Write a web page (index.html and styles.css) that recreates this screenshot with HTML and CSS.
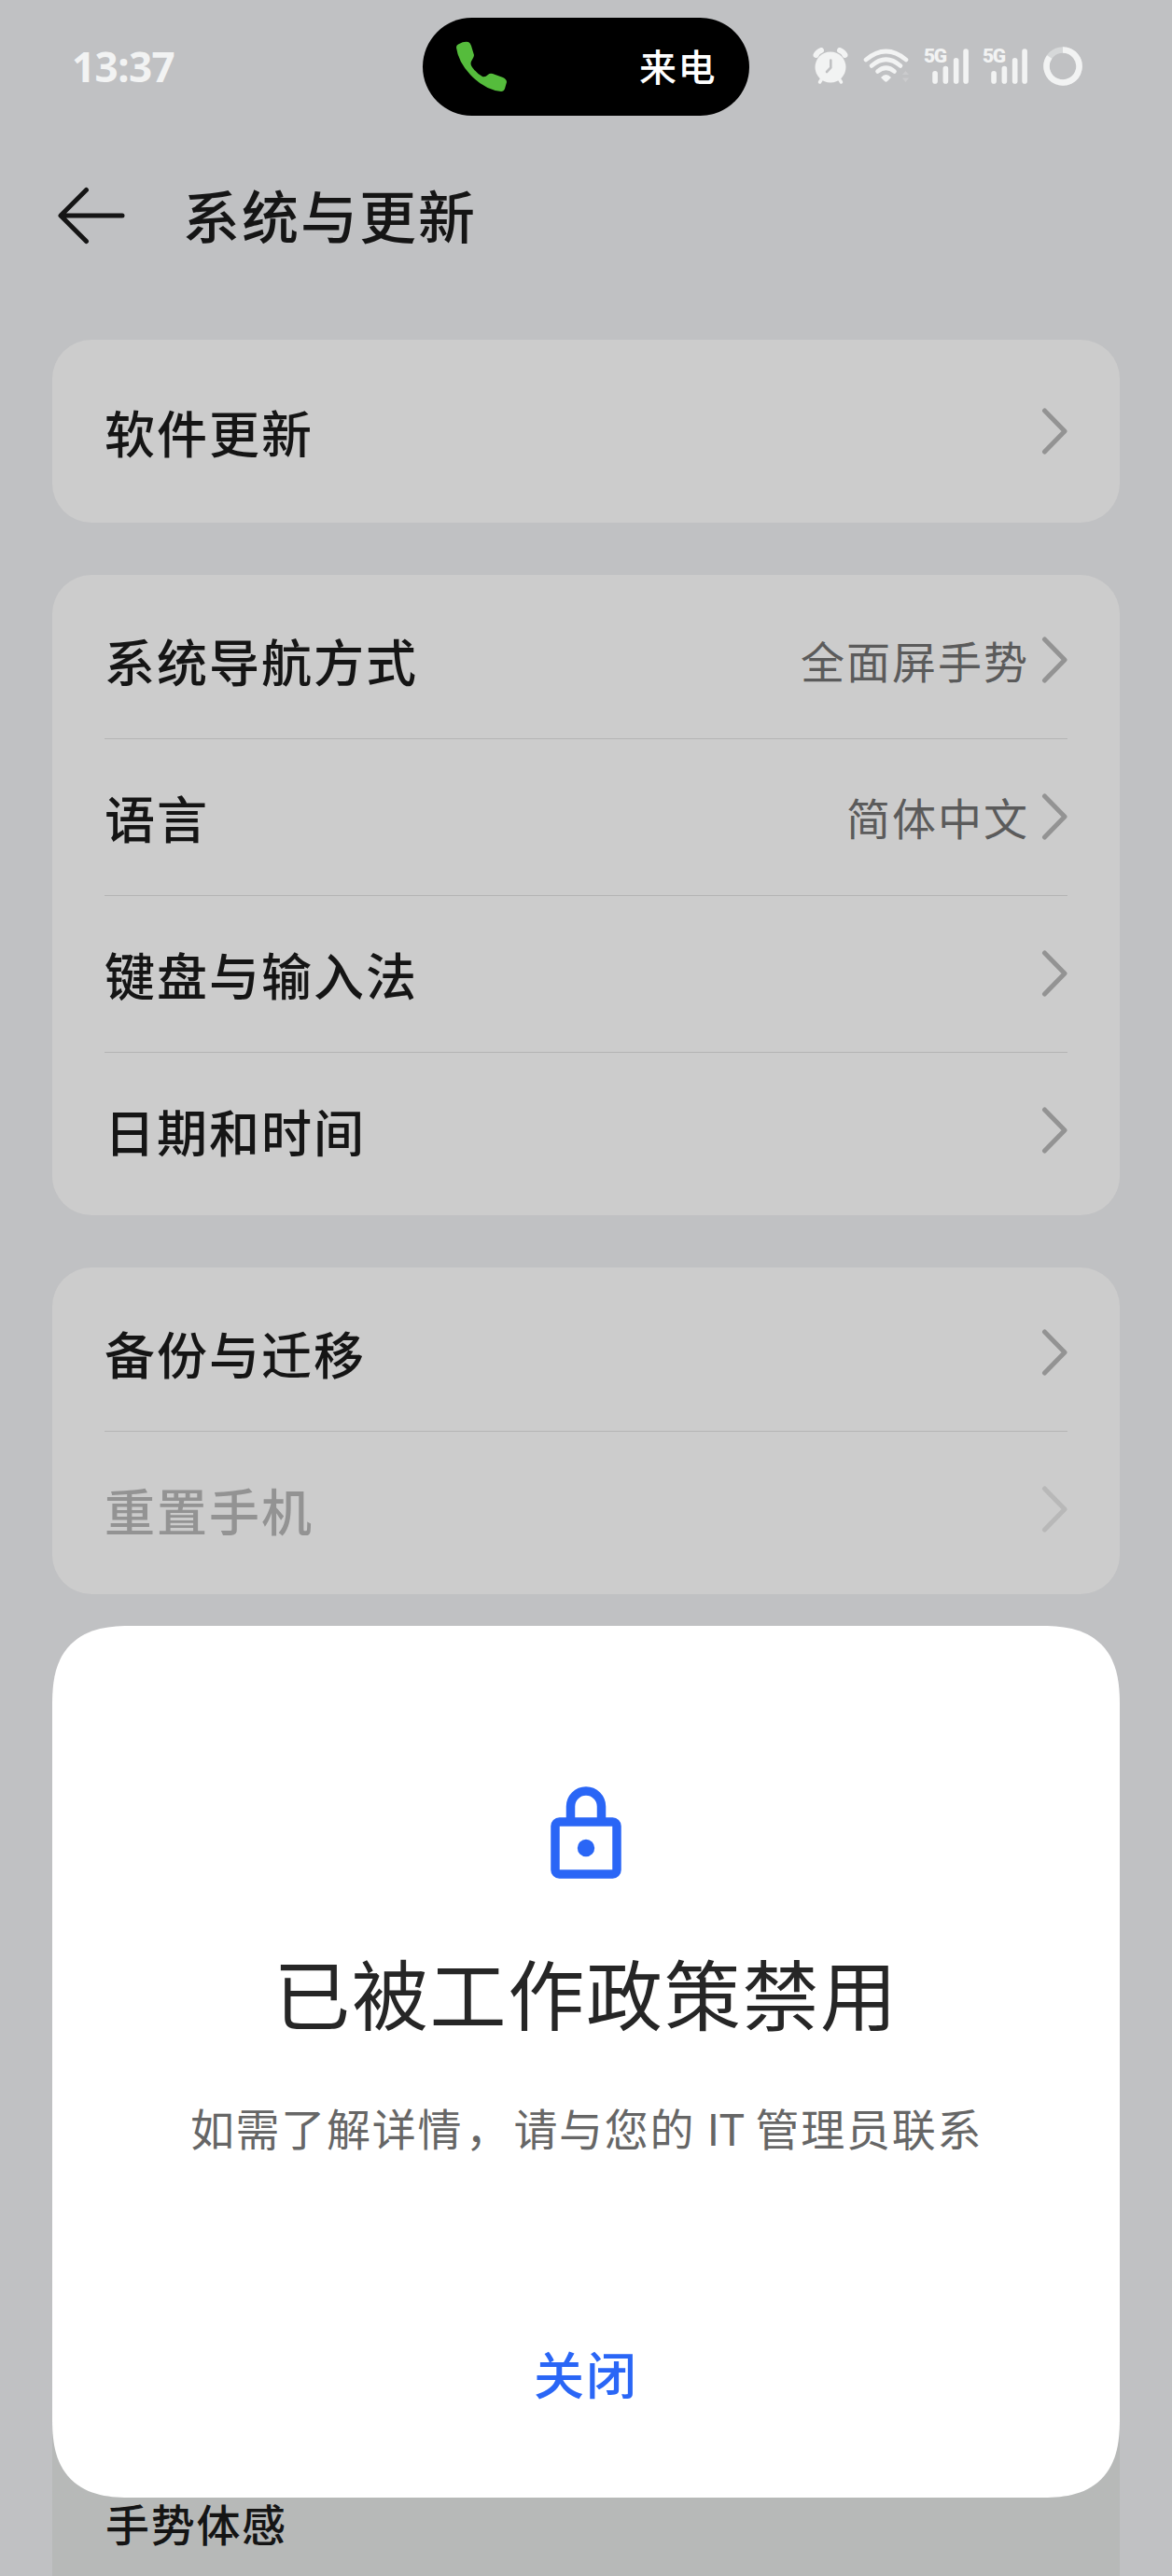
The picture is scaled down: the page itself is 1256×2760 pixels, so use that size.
FILE: index.html
```
<!DOCTYPE html>
<html lang="zh-CN">
  <head>
    <meta charset="utf-8">
    <meta name="viewport" content="width=device-width">
    <title>系统与更新</title>
    <link rel="stylesheet" href="styles.css">
  </head>
  <body>
  <svg class="defs" xmlns="http://www.w3.org/2000/svg">
    <symbol id="chevron" viewBox="0 0 28 50">
      <path d="M3.500 3 L25 25 L3.500 47"/>
    </symbol>
    <symbol id="bars" viewBox="0 0 38 37">
      <path d="M3 26V34M14 21V34M25 12.500V34M35.200 3V34" fill="none" stroke="currentColor" stroke-width="5.500" stroke-linecap="round"/>
    </symbol>
  </svg>

  <div class="screen">
    <div class="statusBar">
      <div class="time">13:37</div>
      <div class="island">
        <svg class="phone" viewBox="0 0 54 54">
          <path d="M3 3 Q8 0 13 1 Q15 2 16 5 L19 15 Q19 17 17 20 Q14 24 17 28 Q22 35 28 38 Q31 39 34 36 Q36 34 39 35 L50 39 Q54 41 54 44 L52 51 Q51 54 48 54 Q30 52 15 36 Q2 22 0 7 Q0 4 3 3Z"/>
        </svg>
        <span>来电</span>
      </div>
      <div class="statusIcons">
        <svg class="alarm" viewBox="0 0 38 40">
          <g fill="none" stroke="currentColor" stroke-linecap="round">
            <path d="M3.500 8 Q5 4.500 9 3M34.500 8 Q33 4.500 29 3" stroke-width="6"/>
            <path d="M10 33 L7.500 37M28 33 L30.500 37" stroke-width="3.500"/>
          </g>
          <circle cx="19" cy="21" r="16.500" fill="currentColor"/>
          <path class="hand" d="M19.300 13.500 V21.500 L15 26"/>
        </svg>
        <svg class="wifi" viewBox="0 0 50 38">
          <g fill="none" stroke="currentColor" stroke-width="4.600" stroke-linecap="round">
            <path d="M3 12 Q24.500 -6 46 12"/>
            <path d="M9 18.500 Q24.500 5 40 18.500"/>
            <path d="M15.500 24.500 Q24.500 17 33.500 24.500"/>
          </g>
          <path d="M19 31 Q24.500 25 30 31 L26 35 Q24.500 36.500 23 35Z" fill="currentColor"/>
          <path d="M42 28 L45.500 24 L49 28ZM42 31.500 L45.500 36 L49 31.500Z" fill="currentColor" opacity=".22"/>
        </svg>
        <div class="signal">
          <span>5G</span>
          <svg><use href="#bars"/></svg>
        </div>
        <div class="signal">
          <span>5G</span>
          <svg><use href="#bars"/></svg>
        </div>
        <svg class="battery" viewBox="0 0 42 42">
          <circle cx="21" cy="21" r="17.500" opacity=".45"/>
          <path d="M21 3.500 A17.500 17.500 0 1 1 6.700 11"/>
        </svg>
      </div>
    </div>

    <header class="titleBar">
      <svg class="back" viewBox="0 0 74 62">
        <path d="M31.500 3.500 L4 31 L31.500 58.500M5 31 H70"/>
      </svg>
      <h1>系统与更新</h1>
    </header>

    <main class="cards">
      <section class="card card-single">
        <div class="row"><span class="label">软件更新</span><svg class="chevron"><use href="#chevron"/></svg></div>
      </section>
      <section class="card">
        <div class="row"><span class="label">系统导航方式</span><span class="value">全面屏手势</span><svg class="chevron"><use href="#chevron"/></svg></div>
        <div class="row"><span class="label">语言</span><span class="value">简体中文</span><svg class="chevron"><use href="#chevron"/></svg></div>
        <div class="row"><span class="label">键盘与输入法</span><svg class="chevron"><use href="#chevron"/></svg></div>
        <div class="row"><span class="label">日期和时间</span><svg class="chevron"><use href="#chevron"/></svg></div>
      </section>
      <section class="card">
        <div class="row"><span class="label">备份与迁移</span><svg class="chevron"><use href="#chevron"/></svg></div>
        <div class="row row-disabled"><span class="label">重置手机</span><svg class="chevron"><use href="#chevron"/></svg></div>
      </section>
      <section class="more">手势体感</section>
    </main>

    <div class="dialog">
      <svg class="lock" viewBox="0 0 76 100">
        <rect x="5" y="38" width="66" height="56" rx="4.500"/>
        <path d="M21.500 38 V21.500 A16.500 16.500 0 0 1 54.500 21.500 V38"/>
        <circle cx="38" cy="66" r="9.200"/>
      </svg>
      <h2>已被工作政策禁用</h2>
      <p>如需了解详<span class="wide">情，</span>请与您的 <span class="latin">IT</span> 管理员联系</p>
      <button class="close">关闭</button>
    </div>
  </div>
  </body>
</html>
```

FILE: styles.css
```
* {
  box-sizing: border-box;
}
body {
  margin: 0;
  background: #c0c1c3;
  font-family: "Noto Sans CJK SC", sans-serif;
}
h1, h2, p {
  margin: 0;
}
.defs {
  position: absolute;
  width: 0;
  height: 0;
}
.screen {
  position: relative;
  width: 1256px;
  height: 2760px;
  overflow: hidden;
  color: #151515;
}

/* Status bar */
.statusBar {
  display: grid;
  grid-template-columns: 453px 350px 1fr;
  align-items: center;
  height: 142px;
  color: #f2f3f3;
}
.time {
  padding-left: 77px;
  font-family: "Noto Sans", sans-serif;
  font-size: 44px;
  font-weight: 700;
  letter-spacing: -0.6px;
}
.island {
  display: flex;
  align-items: center;
  justify-content: space-between;
  height: 105px;
  padding: 0 35px 0 36px;
  border-radius: 53px;
  background: #000000;
  color: #ffffff;
  font-size: 40px;
  font-weight: 500;
  line-height: 60px;
  letter-spacing: 1.5px;
}
.phone {
  width: 54px;
  height: 54px;
  fill: #55bc3c;
}
.island span {
  padding-bottom: 2px;
}
.statusIcons {
  display: flex;
  align-items: center;
  padding-left: 68px;
}
.alarm {
  width: 38px;
  height: 40px;
}
.alarm .hand {
  fill: none;
  stroke: #c0c1c3;
  stroke-width: 2.6px;
  stroke-linecap: round;
}
.wifi {
  width: 50px;
  height: 38px;
  margin-left: 16px;
}
.signal {
  position: relative;
  width: 48px;
  height: 38px;
  margin-left: 15px;
}
.signal span {
  position: absolute;
  left: 0;
  top: 0;
  font-family: Roboto, sans-serif;
  font-size: 21px;
  font-weight: 900;
  line-height: 16px;
  letter-spacing: -1.5px;
}
.signal svg {
  display: block;
  width: 39px;
  height: 38px;
  margin-left: 9px;
}
.battery {
  width: 42px;
  height: 42px;
  margin-left: 17px;
  fill: none;
  stroke: currentColor;
  stroke-width: 6.5px;
}

/* Title bar */
.titleBar {
  display: flex;
  align-items: center;
  height: 178px;
  padding-left: 61px;
}
.back {
  width: 74px;
  height: 62px;
  fill: none;
  stroke: #151515;
  stroke-width: 5px;
  stroke-linecap: round;
  stroke-linejoin: round;
}
.titleBar h1 {
  margin-left: 61px;
  padding-bottom: 2px;
  font-size: 61px;
  font-weight: 500;
  line-height: 90px;
  letter-spacing: 2px;
}

/* Setting cards */
.cards {
  display: flex;
  flex-direction: column;
  gap: 56px;
  padding: 44px 56px 0;
}
.card {
  padding: 7px 56px;
  border-radius: 42px;
  background: #cccccc;
}
.card-single {
  padding: 14px 56px;
}
.row {
  display: flex;
  align-items: center;
  height: 168px;
}
.row + .row {
  background: linear-gradient(#b4b4b4, #b4b4b4) top / 100% 1px no-repeat;
}
.label {
  flex: 1;
  padding-top: 2px;
  font-size: 54px;
  font-weight: 500;
  line-height: 80px;
  letter-spacing: 2px;
}
.value {
  margin-right: 13px;
  color: #5b5b5b;
  font-size: 47px;
  line-height: 70px;
  letter-spacing: 2px;
}
.chevron {
  width: 28px;
  height: 50px;
  fill: none;
  stroke: #939393;
  stroke-width: 5px;
  stroke-linecap: round;
  stroke-linejoin: round;
}
.row-disabled .label {
  color: #939393;
}
.row-disabled .chevron {
  stroke: #b8b8b8;
}
.more {
  height: 860px;
  margin-top: 136px;
  padding: 768px 57px 0;
  background: #b7b9b8;
  font-size: 47px;
  font-weight: 500;
  line-height: 70px;
  letter-spacing: 1.7px;
}

/* Dialog */
.dialog {
  position: absolute;
  left: 56px;
  top: 1742px;
  display: flex;
  flex-direction: column;
  align-items: center;
  width: 1144px;
  height: 934px;
  padding-top: 172px;
  border-radius: 70px;
  background: #ffffff;
}
@supports (corner-shape: superellipse(1.4)) {
  .dialog {
    border-radius: 86px;
    corner-shape: superellipse(1.4);
  }
}
.lock {
  width: 76px;
  height: 100px;
  fill: none;
  stroke: #2a66f6;
  stroke-width: 9.5px;
}
.lock circle {
  fill: #2a66f6;
  stroke: none;
}
.dialog h2 {
  margin-top: 60px;
  color: #262626;
  font-size: 82px;
  font-weight: 400;
  line-height: 120px;
  letter-spacing: 1.7px;
}
.dialog p {
  margin-top: 50px;
  padding-left: 1px;
  color: #666666;
  font-size: 47px;
  line-height: 70px;
  letter-spacing: 1.7px;
}
.dialog p .wide {
  letter-spacing: 4.5px;
}
.dialog p .latin {
  letter-spacing: -1px;
}
.close {
  margin-top: 189px;
  padding: 0;
  border: 0;
  background: none;
  color: #2a66f6;
  font: inherit;
  font-size: 54px;
  font-weight: 500;
  line-height: 80px;
  letter-spacing: 2px;
}
```
